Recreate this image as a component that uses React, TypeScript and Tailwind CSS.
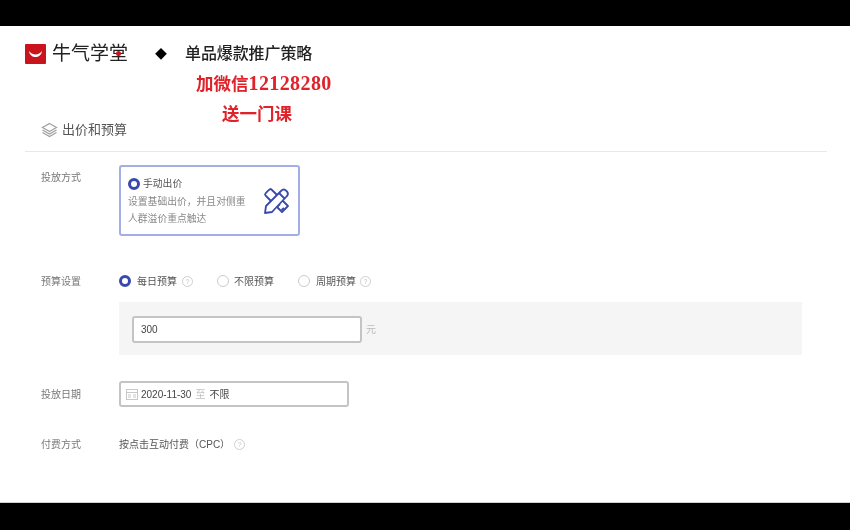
import React from "react";

const cjk = { fontFamily: '"Liberation Sans","Noto Sans CJK SC",sans-serif' };

function Help() {
  return (
    <span className="inline-flex w-[11px] h-[11px] rounded-full border border-[#cfcfcf] items-center justify-center text-[7px] leading-none text-[#c4c4c4]">?</span>
  );
}

function Radio({ on }: { on?: boolean }) {
  return on ? (
    <span className="inline-block w-[12px] h-[12px] rounded-full border-[3.5px] border-[#3949ab] bg-white shrink-0" />
  ) : (
    <span className="inline-block w-[12px] h-[12px] rounded-full border border-[#cccccc] bg-white shrink-0" />
  );
}

function Label({ children }: { children: React.ReactNode }) {
  return <div className="w-[94px] pl-[16px] text-[10px] leading-[14px] text-[#777777] shrink-0 pt-[1px]">{children}</div>;
}

export default function App() {
  return (
    <div className="w-[850px] h-[530px] bg-black flex flex-col overflow-hidden" style={cjk}>
      <div className="h-[26px] shrink-0" />
      <div className="h-[477px] shrink-0 bg-white border-b border-[#cfcfcf] px-[25px] flex flex-col blur-[0.35px]">
        <div className="flex items-center h-[20px] mt-[18px]">
          <div className="w-[21px] h-[20px] bg-[#c9141e] rounded-[1px] flex items-center justify-center">
            <svg width="15" height="11" viewBox="0 0 15 11" fill="none">
              <path d="M1 2 C2 10 13 10 14 2 C11 6.5 4 6.5 1 2 Z" fill="#ffffff" />
            </svg>
          </div>
          <div className="relative ml-[6px] w-[78px] text-[19px] leading-[20px] text-[#222222] whitespace-nowrap">
            牛气学堂
            <span className="absolute left-[64px] top-[7px] w-[5px] h-[5px] rounded-full bg-[#c9141e]" />
          </div>
          <span className="ml-[25px] pt-[2px] text-[12px] leading-[20px] text-black">◆</span>
          <span className="ml-[18px] text-[16px] leading-[20px] font-medium text-[#222222] whitespace-nowrap tracking-[-0.1px]">单品爆款推广策略</span>
        </div>

        <div className="ml-[171px] mt-[9px] h-[20px] text-[17.5px] leading-[20px] font-bold text-[#e0222a] whitespace-nowrap">
          加微信<span style={{ fontFamily: '"Liberation Serif",serif' }} className="text-[20px] tracking-[0.4px]">12128280</span>
        </div>
        <div className="ml-[197px] mt-[11px] h-[20px] text-[17.5px] leading-[20px] font-bold text-[#e0222a] whitespace-nowrap">送一门课</div>

        <div className="flex items-center h-[20px] mt-[-4px] pl-[16px] gap-[4px] text-[13px] text-[#555555]">
          <svg width="17" height="16" viewBox="0 0 17 16" fill="none" stroke="#a0a0a0" strokeWidth="1.2">
            <path d="M8.5 1.5 L15.5 5.5 L8.5 9.5 L1.5 5.5 Z" />
            <path d="M1.5 8 L8.5 12 L15.5 8" />
            <path d="M1.5 10.5 L8.5 14.5 L15.5 10.5" />
          </svg>
          <span>出价和预算</span>
        </div>
        <div className="h-px w-[802px] bg-[#e8e8e8] mt-[11px]" />

        <div className="flex mt-[13px]">
          <div className="pt-[5px]"><Label>投放方式</Label></div>
          <div className="w-[181px] h-[71px] rounded-[3px] border-2 border-[#a3aee6] flex items-center pl-[7px] pr-[8px]">
            <div className="flex-1 pt-[2px]">
              <div className="flex items-center gap-[3px] text-[9.8px] leading-[14px] text-[#555555]">
                <Radio on />
                <span>手动出价</span>
              </div>
              <div className="mt-[2px] text-[9.8px] leading-[17px] text-[#888888] whitespace-nowrap">设置基础出价，并且对侧重</div>
              <div className="text-[9.8px] leading-[17px] text-[#888888] whitespace-nowrap">人群溢价重点触达</div>
            </div>
            <svg width="27" height="28" viewBox="0 0 27 28" fill="none" stroke="#3949ab" strokeWidth="1.8" strokeLinejoin="round" className="shrink-0 mt-[1px]">
              <path d="M2 7.5 C2 6.5 6.5 2 7.5 2 C8 2 9 3 10 4 L25 19 L19 25 L4 10 C3 9 2 8 2 7.5 Z" />
              <path d="M17 17 L14.5 19.5 M21 21 L18.5 23" />
              <path d="M2 26 L3 19 L18 4 C20 2 21.5 2 23.5 4 C25.5 6 25.5 7.5 23.5 9.5 L9 25 Z" fill="#ffffff" />
              <path d="M16 6 L21.5 11.5" />
            </svg>
          </div>
        </div>

        <div className="flex items-center mt-[37px] h-[16px]">
          <Label>预算设置</Label>
          <div className="flex items-center text-[10px] text-[#555555]">
            <Radio on />
            <span className="ml-[6px]">每日预算</span>
            <span className="ml-[5px] flex"><Help /></span>
            <span className="ml-[24px] flex"><Radio /></span>
            <span className="ml-[5px]">不限预算</span>
            <span className="ml-[24px] flex"><Radio /></span>
            <span className="ml-[6px]">周期预算</span>
            <span className="ml-[4px] flex"><Help /></span>
          </div>
        </div>

        <div className="ml-[94px] mt-[13px] w-[683px] h-[53px] bg-[#f5f5f5] flex items-center pl-[13px] pt-[1px]">
          <div className="w-[230px] h-[27px] bg-white rounded-[3px] border-2 border-[#c4c4c4] flex items-center pl-[7px] text-[10px] font-medium text-[#444444]">300</div>
          <span className="ml-[4px] text-[10px] text-[#bbbbbb]">元</span>
        </div>

        <div className="flex items-center mt-[26px]">
          <Label>投放日期</Label>
          <div className="w-[230px] h-[26px] rounded-[3px] border-2 border-[#c4c4c4] flex items-center pl-[5px] text-[10px] text-[#444444]">
            <svg width="12" height="11" viewBox="0 0 12 11" fill="none" stroke="#c8c8c8" strokeWidth="1">
              <rect x="0.5" y="0.5" width="11" height="10" />
              <path d="M0.5 3.5 H11.5 M2 6 H5 M2 8 H5 M7 6 H10 M7 8 H10" />
            </svg>
            <span className="ml-[3px]">2020-11-30</span>
            <span className="ml-[4px] text-[#c0c0c0]">至</span>
            <span className="ml-[4px]">不限</span>
          </div>
        </div>

        <div className="flex items-center mt-[30px] h-[14px]">
          <Label>付费方式</Label>
          <span className="text-[10px] pt-[1px] text-[#555555] whitespace-nowrap">按点击互动付费（CPC）</span>
          <span className="ml-[4px] flex"><Help /></span>
        </div>
      </div>
      <div className="flex-1" />
    </div>
  );
}
